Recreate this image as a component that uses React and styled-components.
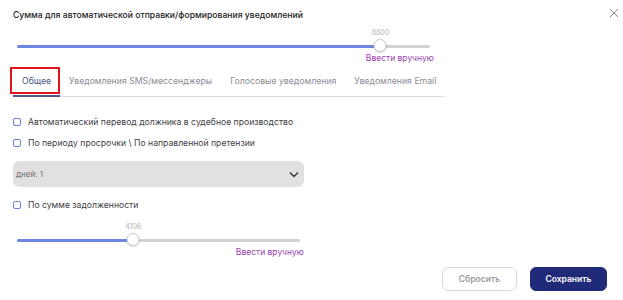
import React from "react";
import styled, { createGlobalStyle } from "styled-components";

const GlobalStyle = createGlobalStyle`
    body {
        margin: 0;
        background: #ffffff;
        font-family: Inter, "Noto Sans", sans-serif;
    }
`;

const Wrapper = styled.div`
    width: 623px;
    height: 300px;
    box-sizing: border-box;
    padding: 9px 16px 0 13px;
    display: flex;
    flex-direction: column;
    align-items: flex-start;
`;

const Header = styled.div`
    align-self: stretch;
    display: flex;
    justify-content: space-between;
    align-items: flex-start;
`;

const Title = styled.p`
    margin: 0;
    font-size: 8.65px;
    line-height: 12px;
    font-weight: 500;
    color: #222;
`;

const CloseButton = styled.button`
    margin: -2px -13px 0 0;
    padding: 0;
    border: none;
    background: none;
    width: 12px;
    height: 12px;
    display: flex;
    align-items: center;
    justify-content: center;
`;

const SliderBlock = styled.div`
    width: ${(p) => p.$width}px;
    margin-top: ${(p) => p.$top}px;
    display: flex;
    flex-direction: column;
`;

const ValueRow = styled.div`
    position: relative;
    height: 12px;
    margin: 0 4px;
`;

const ValueLabel = styled.span`
    position: absolute;
    top: 0;
    transform: translateX(-50%);
    font-size: 7px;
    line-height: 12px;
    color: #b4b4b4;
`;

const TrackArea = styled.div`
    position: relative;
    height: 14px;
    margin: 0 4px;
    display: flex;
    align-items: center;
`;

const Track = styled.div`
    width: 100%;
    height: 3px;
    border-radius: 2px;
    background: #d2d2d4;
    overflow: hidden;
`;

const TrackFill = styled.div`
    height: 100%;
    background: #6c86e2;
`;

const Thumb = styled.div`
    position: absolute;
    top: 0;
    width: 13px;
    height: 13px;
    box-sizing: border-box;
    border-radius: 50%;
    border: 1px solid #c9c9cc;
    background: #fff;
    box-shadow: 0 1px 2px rgba(0, 0, 0, 0.15);
    transform: translateX(-50%);
`;

const ManualLink = styled.span`
    align-self: flex-end;
    margin-top: -1px;
    font-size: 8.5px;
    line-height: 12px;
    color: #9b3fae;
    cursor: pointer;
`;

const TabBar = styled.div`
    display: flex;
    width: 432px;
    margin-top: 3px;
    border-bottom: 1px solid #dcdde8;
`;

const Tab = styled.div`
    position: relative;
    height: 28px;
    padding: 0 9px;
    display: flex;
    align-items: center;
    font-size: 8.7px;
    color: ${(p) => (p.$active ? "#4b5885" : "#8b8b98")};
    border-bottom: 2px solid ${(p) => (p.$active ? "#4b5885" : "transparent")};
    margin-bottom: -1px;
    white-space: nowrap;
`;

const Highlight = styled.span`
    position: absolute;
    left: -3px;
    right: 0;
    top: 0;
    bottom: 1px;
    border: 2px solid #e0161f;
`;

const CheckRow = styled.label`
    display: flex;
    align-items: center;
    gap: 7px;
    height: 12px;
    margin-top: ${(p) => p.$top}px;
    font-size: 8.65px;
    color: #3e3e44;
`;

const CheckBox = styled.span`
    width: 8px;
    height: 8px;
    box-sizing: border-box;
    border: 1.5px solid #6f7fd4;
    border-radius: 2px;
    background: #fff;
`;

const Select = styled.div`
    width: 291px;
    height: 26px;
    margin-top: 12px;
    box-sizing: border-box;
    padding: 0 5px 0 3px;
    border-radius: 6px;
    background: #e1e1e1;
    display: flex;
    align-items: center;
    justify-content: space-between;
    font-size: 8px;
    color: #6f6f72;
`;

const Footer = styled.div`
    align-self: stretch;
    display: flex;
    justify-content: flex-end;
    gap: 13px;
    margin-top: 9px;
`;

const Button = styled.button`
    width: ${(p) => p.$width}px;
    height: 24px;
    border-radius: 6px;
    font-family: Inter, sans-serif;
    font-size: 8.5px;
    font-weight: 600;
    border: 1px solid ${(p) => (p.$primary ? "#1f2a78" : "#d9d9db")};
    background: ${(p) => (p.$primary ? "#1f2a78" : "#fff")};
    color: ${(p) => (p.$primary ? "#fff" : "#9a9aa0")};
`;

function Slider({ value, max, width, top }) {
    const percent = (value / max) * 100;
    return (
        <SliderBlock $width={width} $top={top}>
            <ValueRow>
                <ValueLabel style={{ left: `${percent}%` }}>{value}</ValueLabel>
            </ValueRow>
            <TrackArea>
                <Track>
                    <TrackFill style={{ width: `${percent}%` }} />
                </Track>
                <Thumb style={{ left: `${percent}%` }} />
            </TrackArea>
            <ManualLink>Ввести вручную</ManualLink>
        </SliderBlock>
    );
}

const tabs = ["Общее", "Уведомления SMS/мессенджеры", "Голосовые уведомления", "Уведомления Email"];

function App() {
    return (
        <Wrapper>
            <GlobalStyle />
            <Header>
                <Title>Сумма для автоматической отправки/формирования уведомлений</Title>
                <CloseButton>
                    <svg width="10" height="10" viewBox="0 0 10 10">
                        <path d="M1 1 L9 9 M9 1 L1 9" stroke="#8a8a8a" strokeWidth="1" />
                    </svg>
                </CloseButton>
            </Header>

            <Slider value={8800} max={10000} width={421} top={6} />

            <TabBar>
                {tabs.map((title, i) => (
                    <Tab key={title} $active={i === 0}>
                        {i === 0 && <Highlight />}
                        {title}
                    </Tab>
                ))}
            </TabBar>

            <CheckRow $top={19}>
                <CheckBox />
                Автоматический перевод должника в судебное производство
            </CheckRow>
            <CheckRow $top={9}>
                <CheckBox />
                По периоду просрочки \ По направленной претензии
            </CheckRow>

            <Select>
                <span>дней: 1</span>
                <svg width="10" height="7" viewBox="0 0 10 7">
                    <path d="M1 1.5 L5 5.5 L9 1.5" fill="none" stroke="#333" strokeWidth="1.4" />
                </svg>
            </Select>

            <CheckRow $top={12}>
                <CheckBox />
                По сумме задолженности
            </CheckRow>

            <Slider value={4106} max={10000} width={291} top={10} />

            <Footer>
                <Button $width={75}>Сбросить</Button>
                <Button $width={77} $primary>Сохранить</Button>
            </Footer>
        </Wrapper>
    );
}

export default App;
